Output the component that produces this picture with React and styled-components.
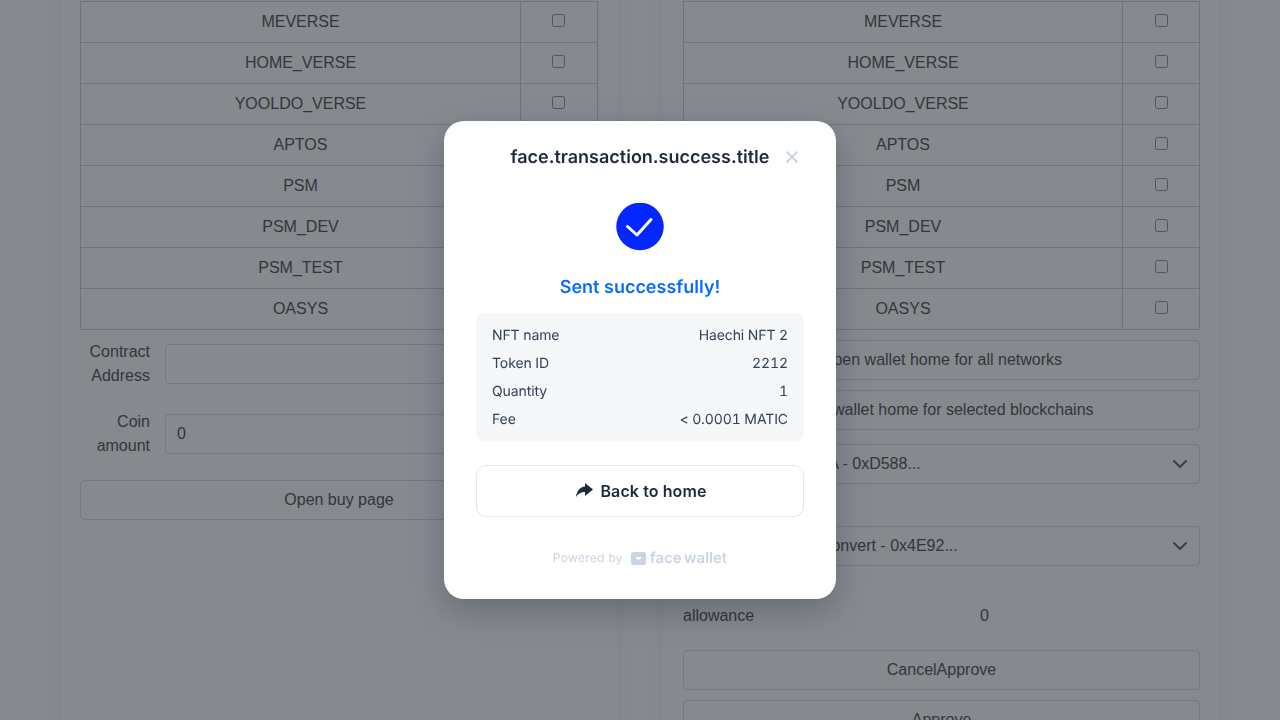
import React from "react";
import styled, { createGlobalStyle } from "styled-components";

const NETWORKS = [
  "MEVERSE",
  "HOME_VERSE",
  "YOOLDO_VERSE",
  "APTOS",
  "PSM",
  "PSM_DEV",
  "PSM_TEST",
  "OASYS",
];

const DETAILS = [
  ["NFT name", "Haechi NFT 2"],
  ["Token ID", "2212"],
  ["Quantity", "1"],
  ["Fee", "< 0.0001 MATIC"],
];

const NetworkTable = ({ $nudge }) => (
  <Table>
    <tbody>
      {NETWORKS.map((name) => (
        <tr key={name}>
          <NameCell>{name}</NameCell>
          <CheckCell $nudge={$nudge}>
            <input type="checkbox" />
          </CheckCell>
        </tr>
      ))}
    </tbody>
  </Table>
);

const Dropdown = ({ $top, value }) => (
  <SelectWrapper $top={$top}>
    <Select defaultValue={value}>
      <option>{value}</option>
    </Select>
    <Chevron viewBox="0 0 16 16">
      <path d="m2 5 6 6 6-6" />
    </Chevron>
  </SelectWrapper>
);

const App = () => (
  <>
    <GlobalStyle />
    <Page>
      <Card>
        <NetworkTable $nudge={1} />
        <FormRow $top={10}>
          <FormLabel>Contract Address</FormLabel>
          <Input />
        </FormRow>
        <FormRow $top={22}>
          <FormLabel>Coin amount</FormLabel>
          <Input defaultValue="0" />
        </FormRow>
        <Button $top={22}>Open buy page</Button>
      </Card>
      <Card $left={20}>
        <NetworkTable />
        <Button $top={10}>Open wallet home for all networks</Button>
        <Button $top={10}>Open wallet home for selected blockchains</Button>
        <Dropdown $top={14} value="Test12 Token USDA - 0xD588..." />
        <Dropdown $top={42} value="Tests Token NFT Convert - 0x4E92..." />
        <InfoRow>
          <span>allowance</span>
          <InfoValue>0</InfoValue>
        </InfoRow>
        <Button $top={22}>CancelApprove</Button>
        <Button $top={10}>Approve</Button>
      </Card>
    </Page>

    <Overlay>
      <Modal>
        <ModalHeader>
          <ModalTitle>face.transaction.success.title</ModalTitle>
          <CloseIcon viewBox="0 0 12 12">
            <path d="M0.5 0.5 11.5 11.5M11.5 0.5 0.5 11.5" />
          </CloseIcon>
        </ModalHeader>
        <SuccessIcon viewBox="0 0 48 48">
          <circle cx="24" cy="23.5" r="23.75" fill="#0527ff" />
          <path d="M11.5 23.5 21 32 35 16.5" />
        </SuccessIcon>
        <SuccessText>Sent successfully!</SuccessText>
        <DetailBox>
          {DETAILS.map(([label, value]) => (
            <DetailRow key={label}>
              <span>{label}</span>
              <span>{value}</span>
            </DetailRow>
          ))}
        </DetailBox>
        <HomeButton>
          <ArrowIcon viewBox="0 0 17 14">
            <path d="M9 0 17 6.5 9 13V9C5 9 2 10.5 0 14 .6 8 4 3.8 9 3.4Z" />
          </ArrowIcon>
          Back to home
        </HomeButton>
        <PoweredBy>
          <PoweredText>Powered by</PoweredText>
          <LogoIcon viewBox="0 0 15 13">
            <rect width="15" height="13" rx="2.5" fill="#cbd5e1" />
            <path d="M4.5 5h6L9 7.5H6z" fill="#fff" />
          </LogoIcon>
          <LogoText>face wallet</LogoText>
        </PoweredBy>
      </Modal>
    </Overlay>
  </>
);

const GlobalStyle = createGlobalStyle`
  html, body {
    margin: 0;
    height: 720px;
    overflow: hidden;
    background: #fff;
    color: #212529;
    font-family: "Liberation Sans", Arial, sans-serif;
    font-size: 16px;
    line-height: 24px;
  }
  * {
    box-sizing: border-box;
  }
`;

const Page = styled.div`
  display: grid;
  grid-template-columns: 558px 558px;
  gap: 44px;
  padding: 1px 60px 0;
  opacity: 0.999;
`;

const Card = styled.div`
  display: flex;
  flex-direction: column;
  height: 900px;
  margin-top: -20px;
  padding: 19px 19px 0 ${(p) => p.$left || 19}px;
  border: 1px solid rgba(0, 0, 0, 0.03);
  background: #fff;
  box-shadow: 0 8px 16px rgba(0, 0, 0, 0.08);
`;

const Table = styled.table`
  width: 100%;
  table-layout: fixed;
  border-collapse: collapse;

  td {
    height: 41px;
    padding: 0;
    border: 1px solid #c4c6c8;
    text-align: center;
  }
`;

const NameCell = styled.td``;

const CheckCell = styled.td`
  width: 77px;
  padding-right: ${(p) => (p.$nudge ? p.$nudge * 2 : 0)}px !important;

  input {
    display: block;
    width: 13px;
    height: 13px;
    margin: -4px auto 0;
  }
`;

const FormRow = styled.div`
  display: grid;
  grid-template-columns: 70px 1fr;
  gap: 15px;
  align-items: center;
  margin-top: ${(p) => p.$top}px;
`;

const FormLabel = styled.label`
  text-align: right;
`;

const Input = styled.input`
  width: 100%;
  height: 40px;
  padding: 0 11px;
  border: 1px solid #ced4da;
  border-radius: 4px;
  color: #212529;
  font: inherit;
`;

const Button = styled.button`
  flex: none;
  width: 100%;
  height: 40px;
  margin-top: ${(p) => p.$top}px;
  border: 1px solid #ced4da;
  border-radius: 4px;
  background: #fff;
  color: #212529;
  font: inherit;
`;

const SelectWrapper = styled.div`
  position: relative;
  margin-top: ${(p) => p.$top}px;
`;

const Select = styled.select`
  display: block;
  width: 100%;
  height: 40px;
  padding: 0 36px 0 12px;
  border: 1px solid #ced4da;
  border-radius: 4px;
  appearance: none;
  background: #fff;
  color: #212529;
  font: inherit;
`;

const Chevron = styled.svg`
  position: absolute;
  top: 12px;
  right: 12px;
  width: 16px;
  height: 16px;
  fill: none;
  stroke: #343a40;
  stroke-width: 2;
  stroke-linecap: round;
  stroke-linejoin: round;
`;

const InfoRow = styled.div`
  display: grid;
  grid-template-columns: 86px 1fr;
  margin-top: 38px;
`;

const InfoValue = styled.span`
  text-align: center;
`;

const Overlay = styled.div`
  position: fixed;
  inset: 0;
  display: flex;
  align-items: center;
  justify-content: center;
  background: rgba(60, 64, 72, 0.62);
`;

const Modal = styled.div`
  display: flex;
  flex-direction: column;
  width: 392px;
  height: 478px;
  padding: 24px 32px 0;
  border-radius: 20px;
  background: #fff;
  box-shadow: 0 12px 32px rgba(15, 23, 42, 0.25);
  color: #1e293b;
  font-family: Inter, "Liberation Sans", sans-serif;
  text-rendering: geometricPrecision;
  opacity: 0.999;
`;

const ModalHeader = styled.div`
  position: relative;
  height: 24px;
  text-align: center;
`;

const ModalTitle = styled.div`
  padding-top: 1px;
  font-size: 18px;
  font-weight: 600;
  line-height: 24px;
`;

const CloseIcon = styled.svg`
  position: absolute;
  top: 6px;
  right: 6px;
  width: 12px;
  height: 12px;
  fill: none;
  stroke: #cbd5e1;
  stroke-width: 2;
`;

const SuccessIcon = styled.svg`
  flex: none;
  align-self: center;
  width: 48px;
  height: 48px;
  margin-top: 34px;

  path {
    fill: none;
    stroke: #fff;
    stroke-width: 3;
    stroke-linecap: round;
    stroke-linejoin: round;
  }
`;

const SuccessText = styled.div`
  margin-top: 24px;
  color: #0a6cff;
  font-size: 18px;
  font-weight: 600;
  line-height: 26px;
  text-align: center;
`;

const DetailBox = styled.div`
  margin-top: 12px;
  border-radius: 8px;
  padding: 8px 16px;
  background: #f5f7f9;
`;

const DetailRow = styled.div`
  display: flex;
  justify-content: space-between;
  height: 28px;
  font-size: 14px;
  font-variant-numeric: tabular-nums;
  letter-spacing: -0.1px;
  line-height: 30px;
  color: #334155;
`;

const HomeButton = styled.button`
  display: flex;
  align-items: center;
  justify-content: center;
  gap: 7px;
  height: 52px;
  margin-top: 24px;
  padding: 0 0 0 3px;
  border: 1px solid #e2e8f0;
  border-radius: 10px;
  background: #fff;
  color: #1e293b;
  font: inherit;
  font-size: 16px;
  font-weight: 600;
  letter-spacing: 0.1px;
`;

const ArrowIcon = styled.svg`
  width: 17px;
  height: 14px;
  margin-top: -2px;
  fill: #1e293b;
`;

const PoweredBy = styled.div`
  display: flex;
  align-items: center;
  justify-content: center;
  height: 20px;
  margin-top: 31px;
  color: #cbd5e1;
`;

const PoweredText = styled.span`
  font-size: 12px;
  letter-spacing: 0.3px;
`;

const LogoIcon = styled.svg`
  width: 15px;
  height: 13px;
  margin-left: 8px;
`;

const LogoText = styled.span`
  margin-left: 4px;
  font-size: 15px;
  font-weight: 600;
  word-spacing: -1.5px;
`;

export default App;
